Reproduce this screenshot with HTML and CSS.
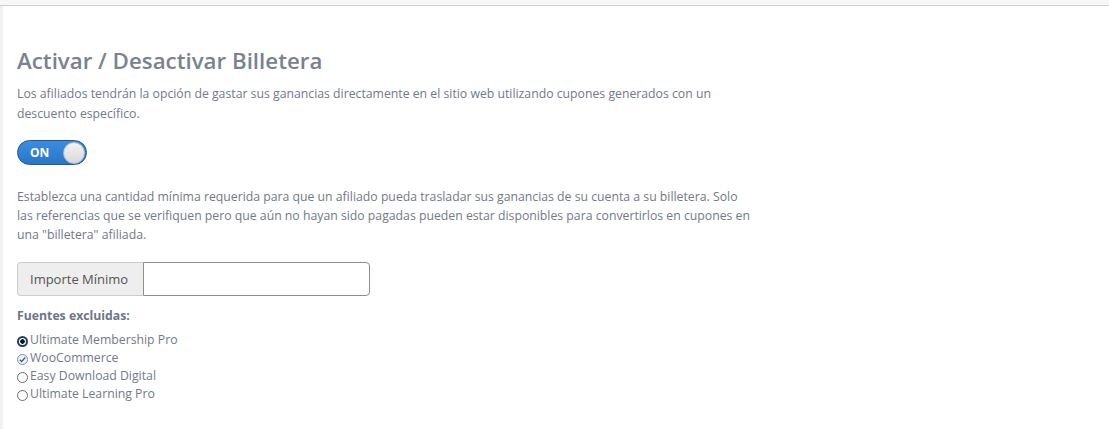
FILE: index.html
```html
<!DOCTYPE html>
<html lang="es">
<head>
    <meta charset="UTF-8">
    <title>Billetera</title>
    <link rel="stylesheet" href="styles.css">
</head>
<body>
    <div class="topbar"></div>
    <div class="page">
        <div class="content">
            <h2>Activar / Desactivar Billetera</h2>
            <p class="desc">Los afiliados tendrán la opción de gastar sus ganancias directamente en el sitio web utilizando cupones generados con un descuento específico.</p>

            <label class="switch">
                <span class="switch-label">ON</span>
                <span class="switch-knob"></span>
            </label>

            <p class="desc second">Establezca una cantidad mínima requerida para que un afiliado pueda trasladar sus ganancias de su cuenta a su billetera. Solo las referencias que se verifiquen pero que aún no hayan sido pagadas pueden estar disponibles para convertirlos en cupones en una "billetera" afiliada.</p>

            <div class="input-group">
                <span class="addon">Importe Mínimo</span>
                <input type="text" class="field">
            </div>

            <h4>Fuentes excluidas:</h4>
            <ul class="sources">
                <li><span class="mark radio on"></span>Ultimate Membership Pro</li>
                <li><span class="mark check">
                    <svg viewBox="0 0 10 10" width="9" height="9"><path d="M2 5.2 L4.1 7.2 L8 2.8" fill="none" stroke="#2f5f9e" stroke-width="1.4"/></svg>
                </span>WooCommerce</li>
                <li><span class="mark radio"></span>Easy Download Digital</li>
                <li><span class="mark radio"></span>Ultimate Learning Pro</li>
            </ul>
        </div>
    </div>
</body>
</html>
```

FILE: styles.css
```css
* {
    margin: 0;
    padding: 0;
    box-sizing: border-box;
}

body {
    font-family: 'Open Sans', 'Noto Sans', sans-serif;
    background: #fff;
    color: #727989;
    height: 429px;
    overflow: hidden;
}

.topbar {
    height: 6px;
    background: #f7f7f7;
    border-bottom: 1px solid #cfcfcf;
}

.page {
    border-left: 3px solid #f1f1f1;
    height: 423px;
}

.content {
    padding: 40px 0 0 14px;
    width: 752px;
}

h2 {
    font-size: 22.3px;
    font-weight: 600;
    color: #7a8191;
    line-height: 30px;
    margin-bottom: 8px;
}

.desc {
    font-size: 12.25px;
    line-height: 20px;
    color: #727989;
    width: 738px;
}

.desc.second {
    margin-top: 22px;
    line-height: 19px;
}

.switch {
    display: flex;
    align-items: center;
    justify-content: space-between;
    width: 70px;
    height: 25px;
    margin-top: 16px;
    padding: 0 1px 0 12px;
    border: 1px solid #1e5a98;
    border-radius: 13px;
    background: linear-gradient(#3b8de0, #2a76c9);
}

.switch-label {
    color: #fff;
    font-weight: 700;
    font-size: 12px;
}

.switch-knob {
    width: 22px;
    height: 22px;
    border-radius: 50%;
    background: linear-gradient(#f3f3f3, #d9d9d9);
    border: 1px solid #bbb;
}

.input-group {
    display: flex;
    width: 353px;
    height: 34px;
    margin-top: 18px;
}

.addon {
    display: flex;
    align-items: center;
    padding: 0 12px;
    font-size: 13px;
    color: #555;
    background: #eee;
    border: 1px solid #ccc;
    border-right: none;
    border-radius: 4px 0 0 4px;
    width: 126px;
}

.field {
    flex: 1;
    border: 1px solid #8e8e8e;
    border-radius: 0 4px 4px 0;
    outline: none;
}

h4 {
    font-size: 12.25px;
    font-weight: 700;
    color: #6e7586;
    margin-top: 11px;
    line-height: 18px;
}

.sources {
    list-style: none;
    margin-top: 6px;
}

.sources li {
    display: flex;
    align-items: center;
    font-size: 12.25px;
    line-height: 18px;
    color: #727989;
}

.mark {
    width: 11px;
    height: 11px;
    margin: 3px 2px 0 0;
    border: 1px solid #6b6b6b;
    display: inline-flex;
    align-items: center;
    justify-content: center;
}

.radio {
    border-radius: 50%;
}

.radio.on {
    border: 2px solid #1b3f66;
    background: radial-gradient(circle, #111 0 2px, #fff 2.5px);
}

.check {
    border-radius: 50%;
    border-color: #7f8ea3;
    background: #eef3fa;
}
```
